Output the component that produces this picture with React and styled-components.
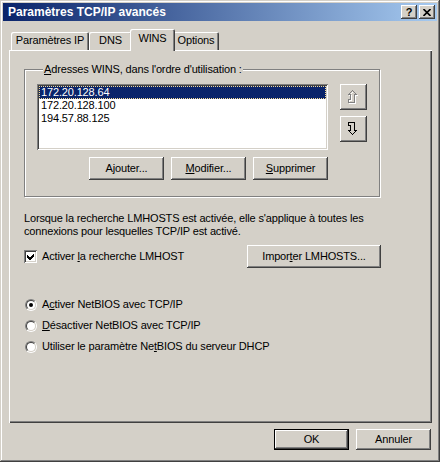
import React from "react";
import styled, { createGlobalStyle } from "styled-components";

const face = "#d4d0c8";
const raised = `inset -1px -1px #404040, inset 1px 1px #ffffff, inset -2px -2px #808080, inset 2px 2px ${face}`;
const sunken = `inset 1px 1px #808080, inset -1px -1px #ffffff, inset 2px 2px #404040, inset -2px -2px ${face}`;

const GlobalStyle = createGlobalStyle`
  html, body { margin: 0; padding: 0; background: ${face}; }
  body { font-family: "Liberation Sans", Arial, sans-serif; font-size: 11px; }
  * { box-sizing: border-box; }
`;

const Window = styled.div`
  width: 440px;
  height: 462px;
  padding: 3px;
  background: ${face};
  box-shadow: inset -1px -1px #404040, inset 1px 1px ${face}, inset -2px -2px #808080, inset 2px 2px #ffffff;
  display: flex;
  flex-direction: column;
  color: #000;
  font-size: 11px;
  line-height: 13px;
  letter-spacing: -0.15px;
`;

const TitleBar = styled.div`
  height: 18px;
  display: flex;
  align-items: center;
  padding: 0 2px 0 5px;
  background: linear-gradient(to right, #0a246a, #a6caf0);
  color: #fff;
  font-weight: bold;
  font-size: 12px;
`;

const TitleText = styled.span`
  flex: 1;
  letter-spacing: 0;
`;

const CaptionButtons = styled.div`
  display: flex;
  gap: 2px;
`;

const CaptionButton = styled.div`
  width: 16px;
  height: 14px;
  background: ${face};
  box-shadow: ${raised};
  display: flex;
  align-items: center;
  justify-content: center;
  color: #000;
  font-weight: bold;
  font-size: 11px;
  line-height: 11px;
`;

const Body = styled.div`
  flex: 1;
  display: flex;
  flex-direction: column;
  padding: 8px 6px 0 6px;
`;

const TabStrip = styled.div`
  height: 21px;
  display: flex;
  align-items: flex-end;
  padding-left: 2px;
`;

const Tab = styled.div`
  width: ${(p) => p.$w}px;
  height: ${(p) => (p.$active ? 22 : 18)}px;
  margin: ${(p) => (p.$active ? "0 -2px -1px -2px" : "0")};
  position: ${(p) => (p.$active ? "relative" : "static")};
  z-index: ${(p) => (p.$active ? 1 : "auto")};
  background: ${face};
  border-radius: 2px 2px 0 0;
  box-shadow: inset 1px 1px #ffffff, inset -1px 0 #404040, inset -2px 0 #808080;
  display: flex;
  justify-content: center;
  padding-top: ${(p) => (p.$active ? 3 : 2)}px;
`;

const Panel = styled.div`
  width: 423px;
  height: 373px;
  background: ${face};
  box-shadow: inset 1px 1px #ffffff, inset -1px -1px #404040, inset -2px -2px #808080;
  padding: 19px 0 0 15px;
  display: flex;
  flex-direction: column;
`;

const Group = styled.div`
  width: 356px;
  border: 1px solid #808080;
  box-shadow: 1px 1px 0 #ffffff, inset 1px 1px 0 #ffffff;
  padding: 0 12px 16px 12px;
  display: flex;
  flex-direction: column;
`;

const Caption = styled.div`
  align-self: flex-start;
  margin: -7px 0 0 6px;
  padding: 0 1px;
  background: ${face};
`;

const ListRow = styled.div`
  display: flex;
  gap: 12px;
  margin-top: 8px;
`;

const LeftCol = styled.div`
  width: 291px;
  display: flex;
  flex-direction: column;
`;

const ListBox = styled.div`
  height: 66px;
  background: #fff;
  box-shadow: ${sunken};
  padding: 2px;
`;

const ListItem = styled.div`
  height: 13px;
  padding-left: 2px;
  line-height: 12px;
  background: ${(p) => (p.$selected ? "#0a246a" : "transparent")};
  color: ${(p) => (p.$selected ? "#fff" : "#000")};
  outline: ${(p) => (p.$selected ? "1px dotted #f5db95" : "none")};
  outline-offset: -1px;
`;

const ButtonRow = styled.div`
  display: flex;
  justify-content: flex-end;
  gap: 7px;
  margin-top: 7px;
`;

const ArrowCol = styled.div`
  display: flex;
  flex-direction: column;
  gap: 6px;
`;

const ArrowButton = styled.div`
  width: 27px;
  height: 26px;
  background: ${face};
  box-shadow: ${raised};
  display: flex;
  align-items: center;
  justify-content: center;
`;

const PushButton = styled.div`
  width: ${(p) => p.$w || 75}px;
  height: ${(p) => p.$h || 23}px;
  background: ${face};
  box-shadow: ${(p) =>
    p.$default
      ? `inset 0 0 0 1px #000, inset -2px -2px #404040, inset 2px 2px #ffffff, inset -3px -3px #808080`
      : raised};
  display: flex;
  align-items: center;
  justify-content: center;
  margin-left: ${(p) => (p.$push ? "auto" : "0")};
`;

const Para = styled.p`
  margin: 15px 0 0 0;
  width: 357px;
`;

const CheckRow = styled.div`
  width: 357px;
  display: flex;
  align-items: center;
  margin-top: 7px;
`;

const CheckBox = styled.div`
  width: 13px;
  height: 13px;
  background: #fff;
  box-shadow: ${sunken};
  display: flex;
  align-items: center;
  justify-content: center;
`;

const Label = styled.span`
  margin-left: 5px;
`;

const RadioList = styled.div`
  display: flex;
  flex-direction: column;
  gap: 8px;
  margin-top: 30px;
`;

const RadioRow = styled.div`
  display: flex;
  align-items: center;
  height: 13px;
  padding-left: 1px;
`;

const Radio = styled.div`
  width: 12px;
  height: 12px;
  border-radius: 50%;
  border: 1px solid;
  border-color: #808080 #ffffff #ffffff #808080;
  display: flex;
`;

const RadioInner = styled.div`
  flex: 1;
  border-radius: 50%;
  border: 1px solid;
  border-color: #404040 ${face} ${face} #404040;
  background: #fff;
  display: flex;
  align-items: center;
  justify-content: center;
  &::after {
    content: "";
    width: 4px;
    height: 4px;
    border-radius: 50%;
    background: ${(p) => (p.$on ? "#000" : "transparent")};
  }
`;

const Footer = styled.div`
  display: flex;
  justify-content: flex-end;
  gap: 7px;
  margin-top: 6px;
`;

const Key = styled.u`
  text-decoration: underline;
`;

const UpArrow = ({ disabled }) => (
  <svg width="11" height="15" viewBox="0 0 11 15" shapeRendering="crispEdges">
    {disabled && (
      <path d="M5.5 1.5L9.5 5.5H7.5V13.5H1.5V10.5H3.5V5.5H1.5Z" fill="none" stroke="#fff" />
    )}
    <path d="M4.5 0.5L8.5 4.5H6.5V12.5H0.5V9.5H2.5V4.5H0.5Z" fill="none" stroke={disabled ? "#808080" : "#000"} />
  </svg>
);

const DownArrow = () => (
  <svg width="11" height="15" viewBox="0 0 11 15" shapeRendering="crispEdges">
    <path d="M0.5 0.5H6.5V8.5H8.5L4.5 12.5L0.5 8.5H2.5V3.5H0.5Z" fill="none" stroke="#000" />
  </svg>
);

const CloseGlyph = () => (
  <svg width="8" height="7" viewBox="0 0 8 7">
    <path d="M0.5 0L7.5 7M7.5 0L0.5 7" stroke="#000" strokeWidth="1.6" />
  </svg>
);

const CheckMark = () => (
  <svg width="9" height="9" viewBox="0 0 9 9" shapeRendering="crispEdges">
    <path d="M1 3V6L3 8H4L8 4V1L3.5 5.5Z" fill="#000" />
  </svg>
);

const addresses = ["172.20.128.64", "172.20.128.100", "194.57.88.125"];

export default function App() {
  return (
    <>
      <GlobalStyle />
      <Window>
        <TitleBar>
          <TitleText>Paramètres TCP/IP avancés</TitleText>
          <CaptionButtons>
            <CaptionButton>?</CaptionButton>
            <CaptionButton><CloseGlyph /></CaptionButton>
          </CaptionButtons>
        </TitleBar>
        <Body>
          <TabStrip>
            <Tab $w={78}>Paramètres IP</Tab>
            <Tab $w={43}>DNS</Tab>
            <Tab $w={45} $active>WINS</Tab>
            <Tab $w={46}>Options</Tab>
          </TabStrip>
          <Panel>
            <Group>
              <Caption><Key>A</Key>dresses WINS, dans l'ordre d'utilisation :</Caption>
              <ListRow>
                <LeftCol>
                  <ListBox>
                    {addresses.map((a, i) => (
                      <ListItem key={a} $selected={i === 0}>{a}</ListItem>
                    ))}
                  </ListBox>
                  <ButtonRow>
                    <PushButton>A<Key>j</Key>outer...</PushButton>
                    <PushButton><Key>M</Key>odifier...</PushButton>
                    <PushButton><Key>S</Key>upprimer</PushButton>
                  </ButtonRow>
                </LeftCol>
                <ArrowCol>
                  <ArrowButton><UpArrow disabled /></ArrowButton>
                  <ArrowButton><DownArrow /></ArrowButton>
                </ArrowCol>
              </ListRow>
            </Group>
            <Para>
              Lorsque la recherche LMHOSTS est activée, elle s'applique à toutes les
              <br />
              connexions pour lesquelles TCP/IP est activé.
            </Para>
            <CheckRow>
              <CheckBox><CheckMark /></CheckBox>
              <Label>Activer <Key>l</Key>a recherche LMHOST</Label>
              <PushButton $w={134} $push>Impor<Key>t</Key>er LMHOSTS...</PushButton>
            </CheckRow>
            <RadioList>
              <RadioRow>
                <Radio><RadioInner $on /></Radio>
                <Label>A<Key>c</Key>tiver NetBIOS avec TCP/IP</Label>
              </RadioRow>
              <RadioRow>
                <Radio><RadioInner /></Radio>
                <Label><Key>D</Key>ésactiver NetBIOS avec TCP/IP</Label>
              </RadioRow>
              <RadioRow>
                <Radio><RadioInner /></Radio>
                <Label>Utiliser le paramètre Ne<Key>t</Key>BIOS du serveur DHCP</Label>
              </RadioRow>
            </RadioList>
          </Panel>
          <Footer>
            <PushButton $default $h={21}>OK</PushButton>
            <PushButton $h={21}>Annuler</PushButton>
          </Footer>
        </Body>
      </Window>
    </>
  );
}
